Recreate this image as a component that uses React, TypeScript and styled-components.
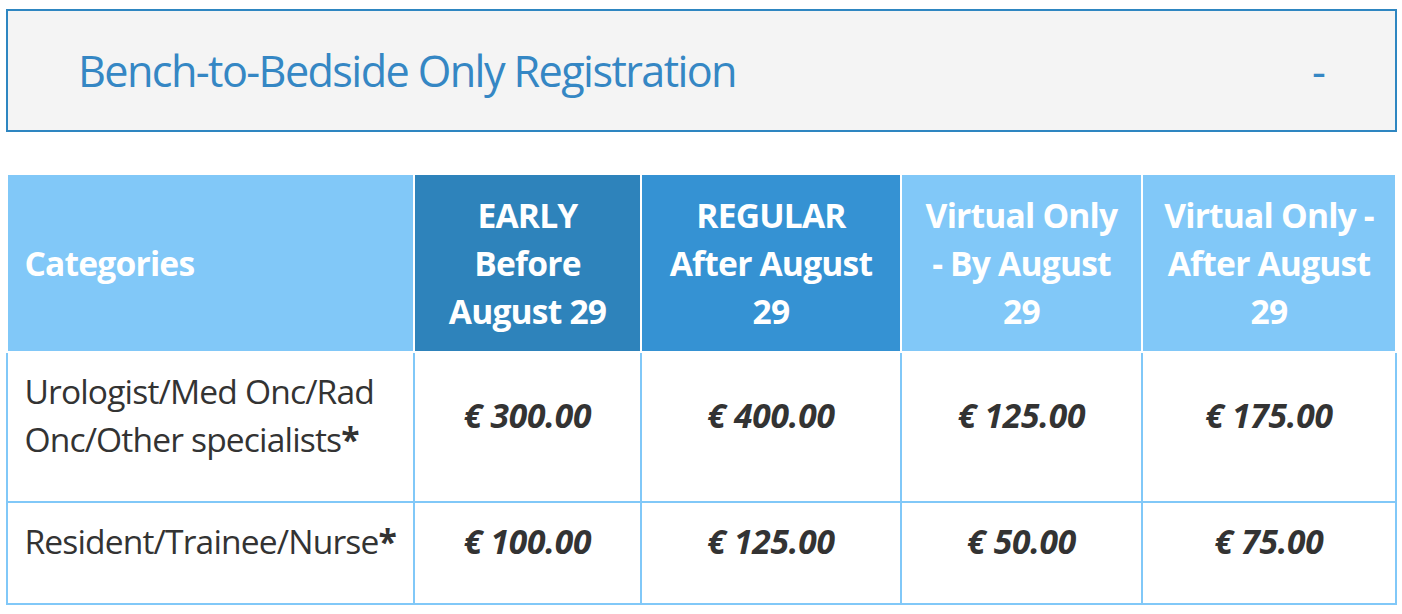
import React from 'react';
import styled, { createGlobalStyle } from 'styled-components';

const Global = createGlobalStyle`
  html, body { margin: 0; padding: 0; background: #ffffff; }
  body { font-family: "Open Sans", "Liberation Sans", sans-serif; color: #333333; }
`;

const Page = styled.div`
  padding: 9px 5px 0 6px;
`;

const AccordionHeader = styled.div`
  box-sizing: border-box;
  height: 123px;
  border: 2px solid #2e86c1;
  background: #f4f4f4;
  display: flex;
  align-items: center;
  justify-content: space-between;
  padding: 0 69px 0 70px;
`;

const Title = styled.h3`
  margin: 0;
  font-weight: 400;
  font-size: 43.2px;
  line-height: 1.1;
  letter-spacing: -1.6px;
  color: #3587c4;
`;

const Toggle = styled.span`
  font-weight: 400;
  font-size: 43.2px;
  line-height: 1.1;
  color: #3587c4;
`;

const Table = styled.table`
  margin-top: 41px;
  width: 1391px;
  border-collapse: collapse;
  table-layout: fixed;
  font-size: 33.6px;
  line-height: 48px;
`;

const Col = styled.col<{ $w: number }>`
  width: ${(p) => p.$w}px;
`;

const HeadCell = styled.th<{ $bg: string; $left?: boolean }>`
  background: ${(p) => p.$bg};
  color: #ffffff;
  font-weight: 700;
  letter-spacing: -0.8px;
  border: 2px solid #ffffff;
  padding: 15.85px 16.4px;
  vertical-align: middle;
  text-align: ${(p) => (p.$left ? 'left' : 'center')};
`;

const Cell = styled.td<{ $center?: boolean }>`
  border: 2px solid #81c8f8;
  padding: 14.6px 16.4px;
  vertical-align: middle;
  text-align: ${(p) => (p.$center ? 'center' : 'left')};
  color: #333333;
  letter-spacing: -0.85px;
`;

const Para = styled.p`
  margin: 0 0 22.8px;
`;

const Price = styled.strong`
  font-style: italic;
  font-weight: 700;
  letter-spacing: -0.25px;
`;

const Star = styled.strong`
  font-weight: 700;
  letter-spacing: 0;
`;

const LIGHT = '#81c8f8';
const DARK = '#2e83bb';
const MID = '#3592d3';

const rows = [
  { name: 'Urologist/Med Onc/Rad Onc/Other specialists', prices: ['300.00', '400.00', '125.00', '175.00'] },
  { name: 'Resident/Trainee/Nurse', prices: ['100.00', '125.00', '50.00', '75.00'] },
];

export default function App() {
  return (
    <>
      <Global />
      <Page>
        <AccordionHeader>
          <Title>Bench-to-Bedside Only Registration</Title>
          <Toggle>-</Toggle>
        </AccordionHeader>
        <Table>
          <colgroup>
            <Col $w={407} />
            <Col $w={227} />
            <Col $w={260} />
            <Col $w={241} />
            <Col $w={254} />
          </colgroup>
          <thead>
            <tr>
              <HeadCell $bg={LIGHT} $left>Categories</HeadCell>
              <HeadCell $bg={DARK}>EARLY<br />Before<br />August 29</HeadCell>
              <HeadCell $bg={MID}>REGULAR<br />After August<br />29</HeadCell>
              <HeadCell $bg={LIGHT}>Virtual Only<br />- By August<br />29</HeadCell>
              <HeadCell $bg={LIGHT}>Virtual Only -<br />After August<br />29</HeadCell>
            </tr>
          </thead>
          <tbody>
            {rows.map((r) => (
              <tr key={r.name}>
                <Cell>
                  <Para>
                    {r.name}
                    <Star>*</Star>
                  </Para>
                </Cell>
                {r.prices.map((p, i) => (
                  <Cell key={i} $center>
                    <Para>
                      <Price>€ {p}</Price>
                    </Para>
                  </Cell>
                ))}
              </tr>
            ))}
          </tbody>
        </Table>
      </Page>
    </>
  );
}
